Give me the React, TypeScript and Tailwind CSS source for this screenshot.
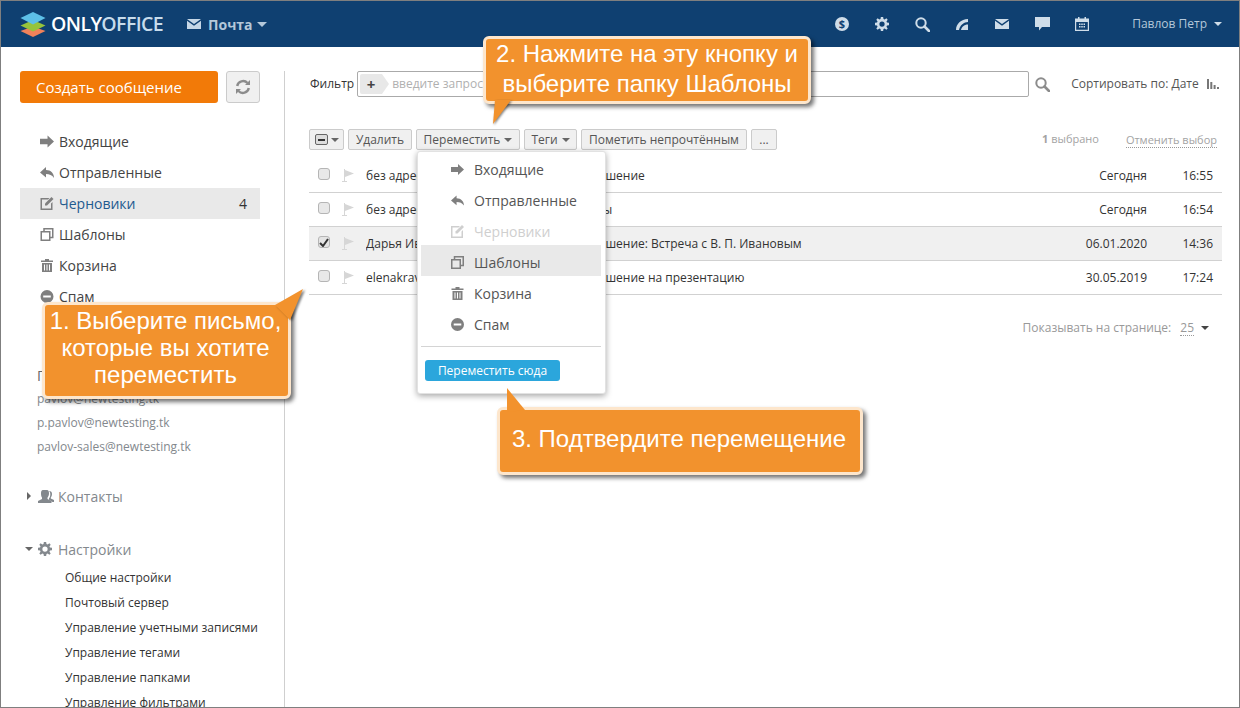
import type { ReactNode } from 'react';

const openSans = "font-['Open_Sans',sans-serif]";

type IconProps = { className?: string };

const Caret = ({ className = '' }: IconProps) => (
  <svg viewBox="0 0 10 5" className={className} fill="currentColor"><path d="M0 0h10L5 5z" /></svg>
);

const InboxIcon = ({ className = '' }: IconProps) => (
  <svg viewBox="0 0 13 11" className={className} fill="currentColor"><path d="M0 3h7V0l6 5.500L7 11V8H0z" /></svg>
);

const SentIcon = ({ className = '' }: IconProps) => (
  <svg viewBox="0 0 14 11" className={className} fill="currentColor"><path d="M0 5.500L6 0v3c5 0 8 3.500 8 8-2-3-4.500-4-8-4v3.500z" /></svg>
);

const DraftIcon = ({ className = '' }: IconProps) => (
  <svg viewBox="0 0 13 13" className={className} fill="currentColor">
    <path d="M0 1h9L7.500 2.500H1.500v9h9V6.500L12 5v8H0z" />
    <path d="M11 0l2 2-6.500 6.500H4.500V6.500z" />
  </svg>
);

const TemplateIcon = ({ className = '' }: IconProps) => (
  <svg viewBox="0 0 13 13" className={className} fill="none" stroke="currentColor" strokeWidth="1.500">
    <rect x="0.750" y="3.750" width="8.500" height="8.500" />
    <path d="M3.500 3.500V.750h8.750v8.750H9.500" />
  </svg>
);

const TrashIcon = ({ className = '' }: IconProps) => (
  <svg viewBox="0 0 12 13" className={className} fill="currentColor">
    <path d="M0 1.500h4V0h4v1.500h4V3H0z" />
    <path d="M1 4h10v9H1zm2 1.500v6h1v-6zm2.500 0v6h1v-6zm2.500 0v6h1v-6z" fillRule="evenodd" />
  </svg>
);

const SpamIcon = ({ className = '' }: IconProps) => (
  <svg viewBox="0 0 12 12" className={className} fill="currentColor">
    <path d="M6 0a6 6 0 110 12A6 6 0 016 0zM2.500 5v2h7V5z" fillRule="evenodd" />
  </svg>
);

const GearIcon = ({ className = '' }: IconProps) => (
  <svg viewBox="0 0 16 16" className={className} fill="currentColor">
    <path
      fillRule="evenodd"
      d="M6.700 0h2.600l.4 2.300 1.300.6L13 1.500 14.500 3l-1.400 2 .6 1.300 2.300.4v2.600l-2.300.4-.6 1.300 1.400 2L13 14.500l-2-1.400-1.300.6-.4 2.300H6.700l-.4-2.300-1.300-.6-2 1.400L1.500 13l1.400-2-.6-1.300L0 9.300V6.700l2.300-.4.6-1.300-1.400-2L3 1.500l2 1.400 1.300-.6zM8 5a3 3 0 100 6 3 3 0 000-6z"
    />
  </svg>
);

const SearchIcon = ({ className = '' }: IconProps) => (
  <svg viewBox="0 0 15 15" className={className} fill="none" stroke="currentColor">
    <circle cx="6" cy="6" r="4.700" strokeWidth="2" />
    <path d="M9.500 9.500L14 14" strokeWidth="2.600" strokeLinecap="round" />
  </svg>
);

const MailIcon = ({ className = '' }: IconProps) => (
  <svg viewBox="0 0 14 10" className={className} fill="currentColor">
    <path d="M0 0h14L7 5z" />
    <path d="M0 1.800l7 5 7-5V10H0z" />
  </svg>
);

const Flag = () => (
  <svg viewBox="0 0 12 13" className="h-[13px] w-3 text-[#d6d6d6]" fill="currentColor">
    <path d="M2 0h1v1l9 3.500L3 8v4h2v1H0v-1h2z" />
  </svg>
);

const Logo = () => (
  <svg viewBox="0 0 26 25" className="h-[25px] w-[26px]">
    <path d="M13 14.500l12.500 4.500L13 25 .5 19z" fill="#f0825a" />
    <path d="M13 8l12.500 5.500L13 19.500.5 13.500z" fill="#96c43c" />
    <path d="M13 0l12.500 6L13 12.500.5 6z" fill="#5dc0e8" />
  </svg>
);

function Callout({ box, tail, children }: { box: string; tail: { className: string; viewBox: string; points: string }; children: ReactNode }) {
  return (
    <>
      <div className={`absolute z-20 flex flex-col items-center justify-center rounded-[6px] border-[3px] border-[#fde6cc] bg-[#f2922d] text-center font-['Liberation_Sans',sans-serif] text-[24px] text-white shadow-[3px_3px_4px_rgba(0,0,0,0.55)] ${box}`}>
        {children}
      </div>
      <svg viewBox={tail.viewBox} className={`absolute z-30 ${tail.className}`}>
        <polygon points={tail.points} fill="#f2922d" />
      </svg>
    </>
  );
}

const folders = [
  { name: 'Входящие', Icon: InboxIcon },
  { name: 'Отправленные', Icon: SentIcon },
  { name: 'Черновики', Icon: DraftIcon },
  { name: 'Шаблоны', Icon: TemplateIcon },
  { name: 'Корзина', Icon: TrashIcon },
  { name: 'Спам', Icon: SpamIcon },
];

const accounts = ['pavlov@newtesting.tk', 'p.pavlov@newtesting.tk', 'pavlov-sales@newtesting.tk'];

const settings = [
  'Общие настройки',
  'Почтовый сервер',
  'Управление учетными записями',
  'Управление тегами',
  'Управление папками',
  'Управление фильтрами',
];

const messages = [
  { from: 'без адреса', subject: 'Приглашение', date: 'Сегодня', time: '16:55', checked: false },
  { from: 'без адреса', subject: 'Расходы', date: 'Сегодня', time: '16:54', checked: false },
  { from: 'Дарья Иванова', subject: 'Приглашение: Встреча с В. П. Ивановым', date: '06.01.2020', time: '14:36', checked: true },
  { from: 'elenakravtsova', subject: 'Приглашение на презентацию', date: '30.05.2019', time: '17:24', checked: false },
];

function TopBar() {
  return (
    <header className="flex h-[46px] items-center bg-[#0f4071] pl-[19px] pr-[17px]">
      <Logo />
      <span className="ml-[5px] text-[19.500px] font-semibold tracking-[-0.600px] text-white">
        ONLY<span className="text-[#c7dcec]">OFFICE</span>
      </span>
      <MailIcon className="ml-6 h-[10px] w-[14px] text-[#c5d7e6]" />
      <span className="ml-[7px] text-[14px] font-bold text-[#b4c8da]">Почта</span>
      <Caret className="ml-1 h-[5px] w-[10px] text-[#b4c8da]" />
      <div className="ml-auto flex items-center text-[#cfdde9]">
        <svg viewBox="0 0 14 14" className="h-[14px] w-[14px]">
          <circle cx="7" cy="7" r="7" fill="currentColor" />
          <text x="7" y="10.800" textAnchor="middle" fontSize="11" fontWeight="700" fill="#0f4071">$</text>
        </svg>
        <GearIcon className="ml-[26px] h-[14px] w-[14px]" />
        <SearchIcon className="ml-[25.500px] h-[15px] w-[15px]" />
        <svg viewBox="0 0 14 12" className="ml-[25.500px] h-3 w-[14px]" fill="currentColor">
          <path d="M1 12C1 6 6 1 13 1v3C9 4 5 7 4 12z" />
          <path d="M6 12c.5-3 3-5.500 7-5.500V12z" />
        </svg>
        <MailIcon className="ml-[26px] h-[10px] w-[14px]" />
        <svg viewBox="0 0 15 14" className="ml-[25.500px] h-[14px] w-[15px]" fill="currentColor">
          <path d="M0 0h15v10H7l-3 3.500V10H0z" />
        </svg>
        <svg viewBox="0 0 14 14" className="ml-[25.500px] h-[14px] w-[14px]" fill="currentColor">
          <path
            fillRule="evenodd"
            d="M0 1.500h3V0h1.500v1.500h5V0H11v1.500h3V14H0zM1.200 5v7.800h11.600V5zM4 6.500h1.500V8H4zm2.250 0h1.500V8h-1.500zm2.250 0H10V8H8.500zM4 9h1.500v1.500H4zm2.250 0h1.500v1.500h-1.500zM8.500 9H10v1.500H8.500z"
          />
        </svg>
      </div>
      <span className="ml-[43px] text-[12px] text-[#b4c8da]">Павлов Петр</span>
      <Caret className="ml-[7px] h-1 w-2 text-[#cfdde9]" />
    </header>
  );
}

function Sidebar() {
  return (
    <aside className="mt-6 w-[284px] shrink-0 overflow-hidden border-r border-[#cfcfcf] pl-[19px] pr-6">
      <div className="flex gap-2">
        <button className="h-8 w-[198px] rounded-[3px] bg-[#f27a08] pl-4 text-left text-[15px] text-white">Создать сообщение</button>
        <button className="flex h-8 w-[34px] items-center justify-center rounded-[3px] border border-[#cbcbcb] bg-[#f0f0f0] text-[#8c8c8c]">
          <svg viewBox="0 0 16 16" className="h-4 w-4" fill="none" stroke="currentColor" strokeWidth="2.400">
            <path d="M2.200 7a6 6 0 0110.300-3" />
            <path d="M13.800 9a6 6 0 01-10.300 3" />
            <path d="M15 1v5h-5z" fill="currentColor" stroke="none" />
            <path d="M1 15v-5h5z" fill="currentColor" stroke="none" />
          </svg>
        </button>
      </div>
      <ul className="mt-[23px]">
        {folders.map(({ name, Icon }) => {
          const active = name === 'Черновики';
          return (
            <li key={name} className={`flex h-[31px] items-center pl-5 pr-[13px] text-[14px] ${active ? 'bg-[#e9e9e9] text-[#1f5a8f]' : 'text-[#444]'}`}>
              <Icon className="h-[13px] w-[14px] text-[#7f7f7f]" />
              <span className="ml-[5px]">{name}</span>
              {active && <span className="ml-auto text-[#333]">4</span>}
            </li>
          );
        })}
      </ul>
      <div className="mt-[51px] flex h-6 items-center pl-[17px] text-[14px] text-[#666]">Почтовые ящики</div>
      {accounts.map(a => (
        <div key={a} className="flex h-6 items-center pl-[17px] text-[12px] text-[#83888d]">{a}</div>
      ))}
      <div className="mt-[25px] flex h-6 items-center pl-[7px] text-[14px] text-[#83888d]">
        <svg viewBox="0 0 4 8" className="h-2 w-1 text-[#666]" fill="currentColor"><path d="M0 0l4 4-4 4z" /></svg>
        <svg viewBox="0 0 16 13" className="ml-[7px] h-[13px] w-4" fill="currentColor">
          <path d="M5 0h4c1.500 0 2 1.500 2 3.500S10 7 9.500 7.500V9l4 2v2H0v-2l4-2V7.500C3.500 7 3 5.500 3 3.500S3.500 0 5 0z" />
          <path d="M11 1c2 0 3 1 3 3s-.8 3-1.200 3.500V8.500L16 10v2h-1.500L11 9.800V8.300c1-1 1.300-2.500 1.300-4S12 1.800 11 1z" />
        </svg>
        <span className="ml-1">Контакты</span>
      </div>
      <div className="mt-[29px] flex h-6 items-center pl-[5px] text-[14px] text-[#83888d]">
        <Caret className="h-1 w-2 text-[#666]" />
        <GearIcon className="ml-[5px] h-[14px] w-[14px]" />
        <span className="ml-[6px]">Настройки</span>
      </div>
      <ul className="mt-1">
        {settings.map(s => (
          <li key={s} className="flex h-[25px] items-center whitespace-nowrap pl-[45px] text-[12px] text-[#333]">{s}</li>
        ))}
      </ul>
    </aside>
  );
}

const toolButton = 'flex h-[21px] items-center rounded-[2px] border border-[#cbcbcb] bg-[#f0f0f0] text-[12px] text-[#555]';

function Toolbar() {
  return (
    <div className="mt-8 flex h-[21px] items-center gap-1">
      <button className={`${toolButton} w-[35px] justify-center gap-[3px]`}>
        <span className="flex h-[11px] w-[13px] items-center justify-center rounded-[2px] border border-[#666] bg-[#ddd]">
          <span className="h-[2px] w-[7px] bg-[#333]" />
        </span>
        <Caret className="h-1 w-2 text-[#666]" />
      </button>
      <button className={`${toolButton} w-16 justify-center`}>Удалить</button>
      <button className={`${toolButton} w-[104px] justify-center gap-1`}>Переместить<Caret className="h-1 w-2 text-[#666]" /></button>
      <button className={`${toolButton} w-[53px] justify-center gap-1`}>Теги<Caret className="h-1 w-2 text-[#666]" /></button>
      <button className={`${toolButton} w-[166px] justify-center`}>Пометить непрочтённым</button>
      <button className={`${toolButton} w-[26px] justify-center`}>...</button>
      <span className="ml-auto text-[11px] text-[#a3a3a3]"><b className="font-bold">1</b> выбрано</span>
      <span className="ml-[23px] mr-[5px] border-b border-dotted border-[#999] text-[11px] leading-[15px] text-[#a3a3a3]">Отменить выбор</span>
    </div>
  );
}

function MessageRow({ from, subject, date, time, checked }: (typeof messages)[number]) {
  return (
    <div className={`flex h-[34px] items-center border-b border-[#d1d1d1] pl-[9px] text-[12px] text-[#333] ${checked ? 'bg-[#f0f0f0]' : ''}`}>
      <span className={`-mt-[3px] flex h-3 w-3 items-center justify-center rounded-[3px] border border-[#b5b5b5] ${checked ? 'bg-[#e4e4e4]' : 'bg-[#e8e8e8]'}`}>
        {checked && (
          <svg viewBox="0 0 10 9" className="h-[9px] w-[10px] text-[#333]" fill="none" stroke="currentColor" strokeWidth="2"><path d="M1 5l3 3 5-7" /></svg>
        )}
      </span>
      <span className="ml-3 flex w-6 shrink-0"><Flag /></span>
      <span className="w-[197px] shrink-0 truncate">{from}</span>
      <span className="flex-1 truncate">{subject}</span>
      <span className="w-[80px] text-right">{date}</span>
      <span className="ml-[26px] mr-[9px] w-10 text-right">{time}</span>
    </div>
  );
}

function MoveMenu() {
  return (
    <div className="absolute left-[416px] top-[150px] z-10 h-[243px] w-[189px] rounded-[3px] border border-[#e2e2e2] bg-white pl-[3px] pr-1 shadow-[0_2px_6px_rgba(0,0,0,0.35)]">
      {folders.map(({ name, Icon }) => {
        const disabled = name === 'Черновики';
        const active = name === 'Шаблоны';
        return (
          <div key={name} className={`flex h-[31px] items-center pl-[30px] pt-[3px] text-[14px] ${active ? 'bg-[#e9e9e9]' : ''} ${disabled ? 'text-[#cfcfcf]' : 'text-[#555]'}`}>
            <Icon className={`h-[13px] w-[13px] ${disabled ? 'text-[#cfcfcf]' : 'text-[#7f7f7f]'}`} />
            <span className="ml-[10px]">{name}</span>
          </div>
        );
      })}
      <div className="mt-2 border-t border-[#d4d4d4]" />
      <button className="ml-1 mt-[13px] block h-[21px] w-[135px] rounded-[3px] bg-[#2ba6dc] text-[12px] text-white">Переместить сюда</button>
    </div>
  );
}

export default function App() {
  return (
    <div className={`relative box-border h-[708px] w-[1240px] overflow-hidden border border-[#7f7f7f] bg-white ${openSans}`}>
      <TopBar />
      <div className="flex h-[660px]">
        <Sidebar />
        <main className="min-w-0 flex-1 pl-6 pr-[17px] pt-6">
          <div className="flex h-[26px] items-center">
            <span className="ml-px text-[12px] text-[#333]">Фильтр</span>
            <div className="ml-[3px] flex h-[26px] w-[672px] items-center rounded-[2px] border border-[#aaa] pl-[2px]">
              <span className="flex h-5 w-[22px] items-center justify-center rounded-l-[2px] bg-[#e8e8e8] text-[15px] font-bold leading-none text-[#444]">+</span>
              <svg viewBox="0 0 7 20" className="h-5 w-[7px] text-[#e8e8e8]" fill="currentColor"><path d="M0 0l7 10-7 10z" /></svg>
              <span className="ml-[3px] text-[12px] text-[#b0b0b0]">введите запрос</span>
            </div>
            <SearchIcon className="ml-[6px] h-[15px] w-[15px] text-[#8c8c8c]" />
            <span className="ml-[21px] text-[12px] text-[#555]">Сортировать по: Дате</span>
            <svg viewBox="0 0 12 10" className="ml-2 h-[10px] w-3 text-[#777]" fill="currentColor">
              <path d="M0 0h2v10H0zM3.300 3h2v7h-2zM6.600 6h2v4h-2zM10 8h2v2h-2z" />
            </svg>
          </div>
          <Toolbar />
          <div className="mt-[9px]">
            {messages.map(m => <MessageRow key={m.time} {...m} />)}
          </div>
          <div className="mt-[23px] flex h-5 items-center justify-end pr-[13px] text-[12px] text-[#999]">
            Показывать на странице:
            <span className="ml-[9px] border-b border-dotted border-[#999] text-[12px] leading-[15px]">25</span>
            <Caret className="ml-[7px] h-1 w-2 text-[#444]" />
          </div>
        </main>
      </div>

      <MoveMenu />

      <Callout
        box="left-[41px] top-[301px] h-[97px] w-[249px] pb-[6px] pr-[2px] leading-[27px]"
        tail={{ className: 'left-[274px] top-[287px] h-[32px] w-[30px] drop-shadow-[2px_1px_1px_rgba(0,0,0,0.5)]', viewBox: '0 0 30 32', points: '0,17 28,1 15,32' }}
      >
        <span>1. Выберите письмо,</span>
        <span>которые вы хотите</span>
        <span>переместить</span>
      </Callout>
      <Callout
        box="left-[482px] top-[35px] h-[68px] w-[328px] pb-[2px] leading-[30px]"
        tail={{ className: 'left-[490px] top-[99px] h-[25px] w-[22px] drop-shadow-[1px_1px_1px_rgba(0,0,0,0.5)]', viewBox: '0 0 22 25', points: '4,0 20,0 2,24' }}
      >
        <span>2. Нажмите на эту кнопку и</span>
        <span>выберите папку Шаблоны</span>
      </Callout>
      <Callout
        box="left-[496px] top-[406px] h-[68px] w-[366px] pb-[4px] pr-[2px] leading-[30px]"
        tail={{ className: 'left-[504px] top-[386px] h-[25px] w-[22px]', viewBox: '0 0 22 25', points: '2,1 20,23 2,25' }}
      >
        <span>3. Подтвердите перемещение</span>
      </Callout>
    </div>
  );
}
